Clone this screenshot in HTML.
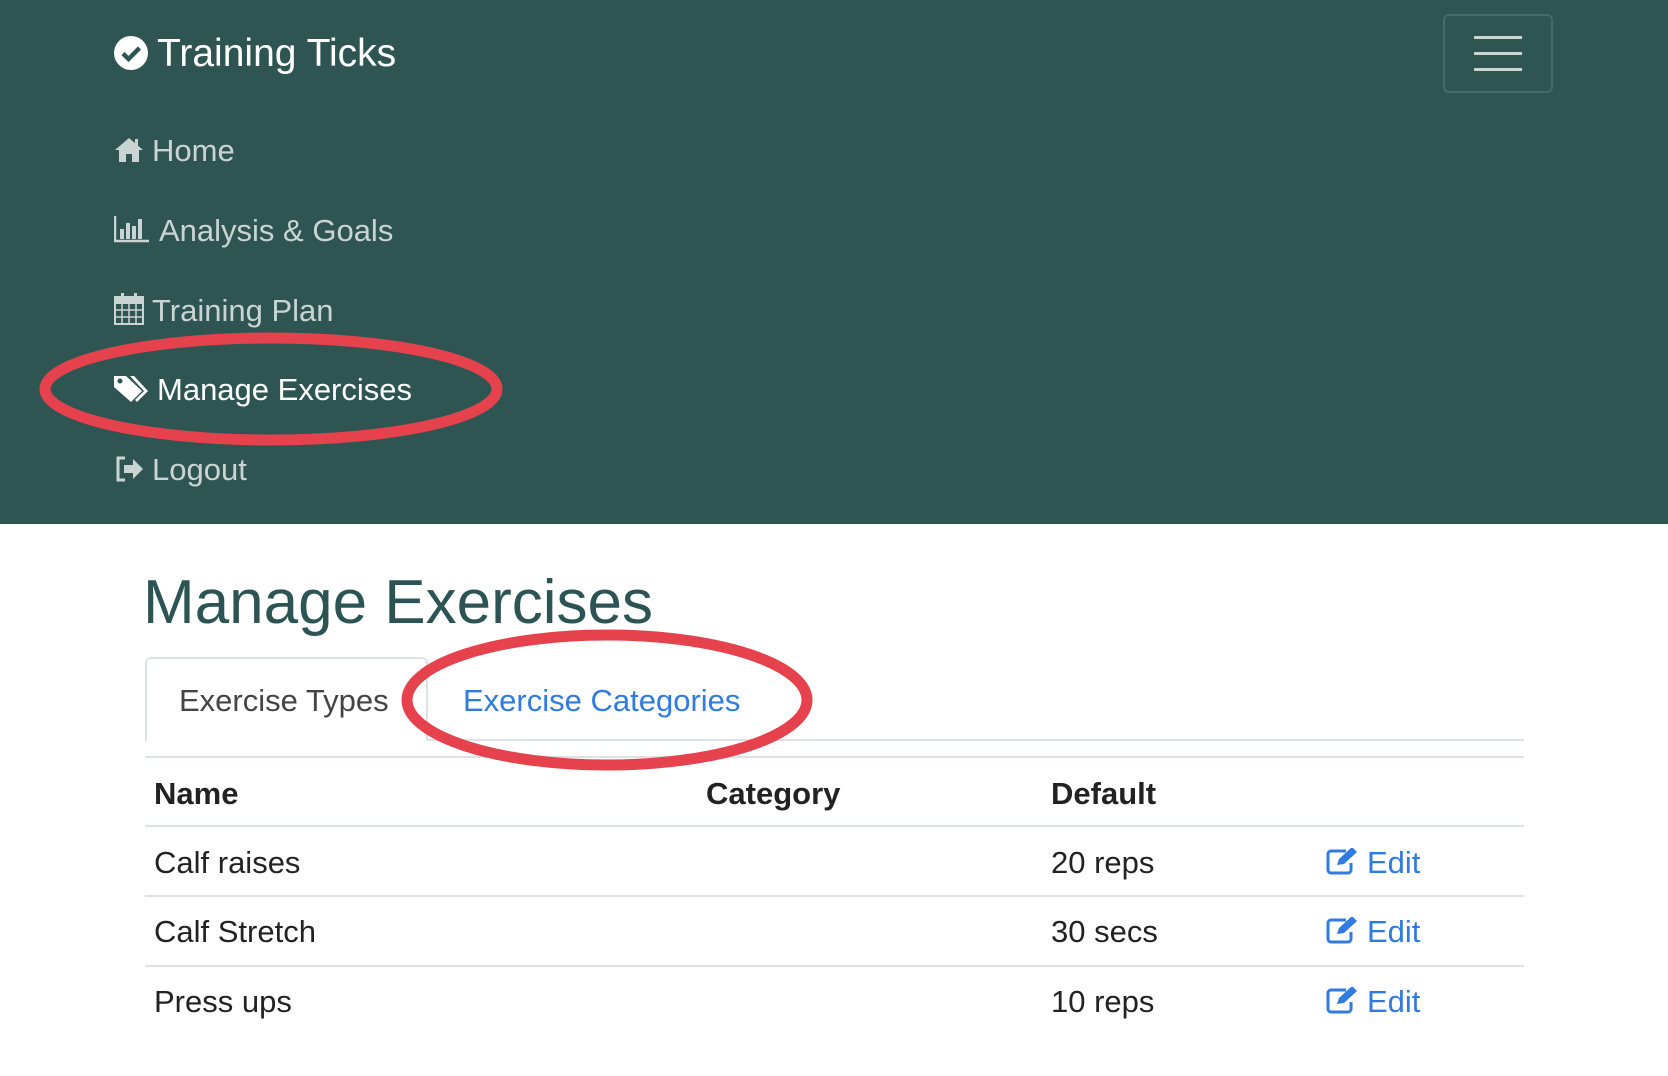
<!DOCTYPE html>
<html><head><meta charset="utf-8"><style>
*{margin:0;padding:0;box-sizing:border-box}
body{width:1668px;height:1076px;position:relative;background:#fff;font-family:"Liberation Sans",sans-serif;overflow:hidden}
.nav{position:absolute;left:0;top:0;width:1668px;height:524px;background:#2f5553}
.t{position:absolute;white-space:nowrap;line-height:1}
.ni{color:#c9d4d3;font-size:31px}
.ic{position:absolute}
.row{position:absolute;left:145px;width:1379px;height:2px;background:#dee2e6}
.td{font-size:31px;color:#222}
.th{font-size:31px;color:#222;font-weight:bold}
.ed{font-size:31px;color:#2f7be0}
</style></head><body>
<div class="nav">
  <svg class="ic" style="left:114px;top:36px" width="34" height="34" viewBox="0 0 34 34"><circle cx="17" cy="17" r="17" fill="#fff"/><path d="M9 17.5l5.5 5.5 11-11" stroke="#2f5553" stroke-width="4.5" fill="none"/></svg>
  <div class="t" style="left:157px;top:34px;font-size:39px;color:#fff">Training Ticks</div>
  <div style="position:absolute;left:1443px;top:14px;width:110px;height:79px;border:2px solid #466a68;border-radius:6px"></div>
  <div style="position:absolute;left:1474px;top:36px;width:48px;height:3px;background:#c9d4d3"></div>
  <div style="position:absolute;left:1474px;top:52px;width:48px;height:3px;background:#c9d4d3"></div>
  <div style="position:absolute;left:1474px;top:68px;width:48px;height:3px;background:#c9d4d3"></div>

  <svg class="ic" style="left:114px;top:137px" width="30" height="26" viewBox="0 0 30 26"><path d="M15 1L1 13h4v12h7v-8h6v8h7V13h4z" fill="#c9d4d3"/><rect x="21" y="2" width="3" height="7" fill="#c9d4d3"/></svg>
  <div class="t ni" style="left:152px;top:135px">Home</div>

  <svg class="ic" style="left:114px;top:215px" width="36" height="28" viewBox="0 0 36 28"><path d="M1 1v25h34" stroke="#c9d4d3" stroke-width="2.5" fill="none"/><rect x="6" y="14" width="4" height="10" fill="#c9d4d3"/><rect x="12" y="8" width="4" height="16" fill="#c9d4d3"/><rect x="18" y="11" width="4" height="13" fill="#c9d4d3"/><rect x="24" y="4" width="4" height="20" fill="#c9d4d3"/></svg>
  <div class="t ni" style="left:159px;top:215px">Analysis &amp; Goals</div>

  <svg class="ic" style="left:114px;top:293px" width="30" height="32" viewBox="0 0 30 32"><rect x="1" y="4" width="28" height="27" fill="none" stroke="#c9d4d3" stroke-width="2"/><rect x="1" y="4" width="28" height="7" fill="#c9d4d3"/><rect x="7" y="0" width="3" height="8" fill="#c9d4d3"/><rect x="20" y="0" width="3" height="8" fill="#c9d4d3"/><path d="M1 17h28M1 24h28M8 11v20M15 11v20M22 11v20" stroke="#c9d4d3" stroke-width="1.5"/></svg>
  <div class="t ni" style="left:152px;top:295px">Training Plan</div>

  <svg class="ic" style="left:113px;top:374px" width="36" height="30" viewBox="0 0 36 30"><path d="M1 2h12l16 15-11 11L1 13z" fill="#fff"/><circle cx="7" cy="7" r="2.5" fill="#2f5553"/><path d="M17 2h4l14 15-11 11-2-2 9-9z" fill="#fff"/></svg>
  <div class="t" style="left:157px;top:374px;font-size:31px;color:#fff">Manage Exercises</div>

  <svg class="ic" style="left:114px;top:455px" width="30" height="28" viewBox="0 0 30 28"><path d="M11 3H4v22h7" stroke="#c9d4d3" stroke-width="3" fill="none"/><path d="M10 10h9V4l10 10-10 10v-6h-9z" fill="#c9d4d3"/></svg>
  <div class="t ni" style="left:152px;top:454px">Logout</div>
</div>

<div class="t" style="left:143px;top:572px;font-size:62px;color:#2d5454">Manage Exercises</div>

<div style="position:absolute;left:145px;top:657px;width:283px;height:84px;border:2px solid #dee2e6;border-bottom:none;border-radius:6px 6px 0 0;background:#fff"></div>
<div style="position:absolute;left:428px;top:739px;width:1096px;height:2px;background:#dee2e6"></div>
<div class="t" style="left:179px;top:685px;font-size:31px;color:#444">Exercise Types</div>
<div class="t" style="left:463px;top:685px;font-size:31px;color:#2f7be0">Exercise Categories</div>

<div class="row" style="top:756px"></div>
<div class="row" style="top:825px"></div>
<div class="row" style="top:895px"></div>
<div class="row" style="top:965px"></div>

<div class="t th" style="left:154px;top:778px">Name</div>
<div class="t th" style="left:706px;top:778px">Category</div>
<div class="t th" style="left:1051px;top:778px">Default</div>

<div class="t td" style="left:154px;top:847px">Calf raises</div>
<div class="t td" style="left:1051px;top:847px">20 reps</div>
<div class="t td" style="left:154px;top:916px">Calf Stretch</div>
<div class="t td" style="left:1051px;top:916px">30 secs</div>
<div class="t td" style="left:154px;top:986px">Press ups</div>
<div class="t td" style="left:1051px;top:986px">10 reps</div>

<svg class="ic" style="left:1326px;top:848px" width="32" height="28" viewBox="0 0 32 28"><path d="M20 3H5a3 3 0 0 0-3 3v16a3 3 0 0 0 3 3h17a3 3 0 0 0 3-3v-7" stroke="#2f7be0" stroke-width="3" fill="none"/><path d="M11 17l2-6 13-12 5 5-13 12z" fill="#2f7be0"/></svg>
<div class="t ed" style="left:1367px;top:847px">Edit</div>
<svg class="ic" style="left:1326px;top:917px" width="32" height="28" viewBox="0 0 32 28"><path d="M20 3H5a3 3 0 0 0-3 3v16a3 3 0 0 0 3 3h17a3 3 0 0 0 3-3v-7" stroke="#2f7be0" stroke-width="3" fill="none"/><path d="M11 17l2-6 13-12 5 5-13 12z" fill="#2f7be0"/></svg>
<div class="t ed" style="left:1367px;top:916px">Edit</div>
<svg class="ic" style="left:1326px;top:987px" width="32" height="28" viewBox="0 0 32 28"><path d="M20 3H5a3 3 0 0 0-3 3v16a3 3 0 0 0 3 3h17a3 3 0 0 0 3-3v-7" stroke="#2f7be0" stroke-width="3" fill="none"/><path d="M11 17l2-6 13-12 5 5-13 12z" fill="#2f7be0"/></svg>
<div class="t ed" style="left:1367px;top:986px">Edit</div>

<svg style="position:absolute;left:0;top:0" width="1668" height="1076">
<ellipse cx="271" cy="389" rx="226" ry="51" fill="none" stroke="#e5424d" stroke-width="11"/>
<ellipse cx="607" cy="700" rx="200" ry="65" fill="none" stroke="#e5424d" stroke-width="11"/>
</svg>
</body></html>
